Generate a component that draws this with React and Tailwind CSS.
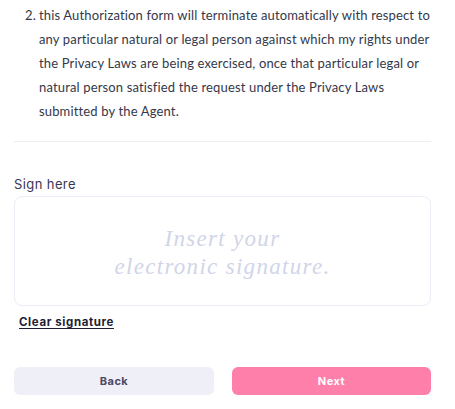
export default function App() {
  const lines = [
    "this Authorization form will terminate automatically with respect to",
    "any particular natural or legal person against which my rights under",
    "the Privacy Laws are being exercised, once that particular legal or",
    "natural person satisfied the request under the Privacy Laws",
    "submitted by the Agent.",
  ];
  return (
    <div className="w-[455px] h-[409px] bg-white overflow-hidden">
      <div className="ml-[14px] w-[417px]">
        <div
          className="flex pl-[11px] pt-[3px] text-[13px] leading-[24px] tracking-[0.15px] text-[#34384a]"
          style={{ fontFamily: "Lato, 'Liberation Sans', sans-serif" }}
        >
          <span className="w-[14px] shrink-0">2.</span>
          <div>
            {lines.map((l, i) => (
              <div key={i} className="whitespace-nowrap">{l}</div>
            ))}
          </div>
        </div>
        <div className="mt-[18px] h-px bg-[#efeff2]" />
        <div
          className="mt-[34px] text-[13px] leading-[16px] tracking-[0.4px] text-[#3b3552]"
          style={{ fontFamily: "Inter, 'Open Sans', sans-serif" }}
        >
          Sign here
        </div>
        <div className="mt-[4px] h-[110px] rounded-[8px] border border-[#ececf7] flex flex-col items-center justify-center pt-[3px]">
          <div
            className="italic font-light text-[23px] leading-[28px] text-[#d0d5e8] text-center tracking-[1.3px]"
            style={{ fontFamily: "'Liberation Serif', serif" }}
          >
            <div>Insert your</div>
            <div>electronic signature.</div>
          </div>
        </div>
        <div
          className="mt-[9px] ml-[5px] text-[11.5px] leading-[14px] font-bold underline underline-offset-2 text-[#1f1d36] tracking-[0.6px]"
          style={{ fontFamily: "Inter, 'Open Sans', sans-serif" }}
        >
          Clear signature
        </div>
        <div
          className="mt-[38px] flex gap-[18px] text-[11px] font-bold tracking-[0.5px]"
          style={{ fontFamily: "Inter, 'Open Sans', sans-serif" }}
        >
          <button className="w-[200px] h-[28px] rounded-[6px] bg-[#efeff8] text-[#4b4868]">Back</button>
          <button className="flex-1 h-[28px] rounded-[6px] bg-[#ff7fab] text-white">Next</button>
        </div>
      </div>
    </div>
  );
}
